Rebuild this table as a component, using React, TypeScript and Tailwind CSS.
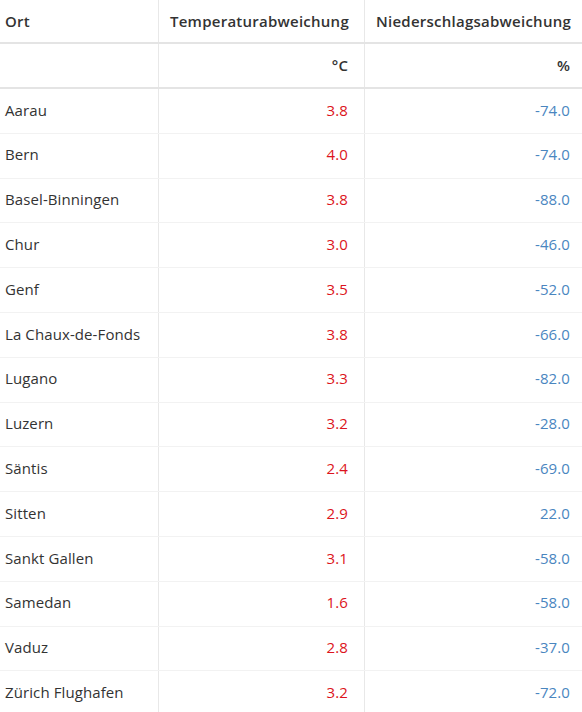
const ROWS = [
  { ort: 'Aarau', t: '3.8', n: '-74.0' },
  { ort: 'Bern', t: '4.0', n: '-74.0' },
  { ort: 'Basel-Binningen', t: '3.8', n: '-88.0' },
  { ort: 'Chur', t: '3.0', n: '-46.0' },
  { ort: 'Genf', t: '3.5', n: '-52.0' },
  { ort: 'La Chaux-de-Fonds', t: '3.8', n: '-66.0' },
  { ort: 'Lugano', t: '3.3', n: '-82.0' },
  { ort: 'Luzern', t: '3.2', n: '-28.0' },
  { ort: 'Säntis', t: '2.4', n: '-69.0' },
  { ort: 'Sitten', t: '2.9', n: '22.0' },
  { ort: 'Sankt Gallen', t: '3.1', n: '-58.0' },
  { ort: 'Samedan', t: '1.6', n: '-58.0' },
  { ort: 'Vaduz', t: '2.8', n: '-37.0' },
  { ort: 'Zürich Flughafen', t: '3.2', n: '-72.0' },
]

export default function App() {
  return (
    <div className="w-[582px] bg-white text-[15px] tracking-[0.1px] text-[#333] font-['Open_Sans',sans-serif]">
      {/* Kopfzeile */}
      <div className="grid grid-cols-[159px_206px_1fr] h-[44px] border-b-2 border-[#e4e4e4] font-semibold tracking-[0.25px]">
        <div className="flex items-center pl-[5px] border-r border-[#e8e8e8]">Ort</div>
        <div className="flex items-center pl-[11px] border-r border-[#e8e8e8]">Temperaturabweichung</div>
        <div className="flex items-center pl-[11px] whitespace-nowrap">Niederschlagsabweichung</div>
      </div>

      {/* Einheiten */}
      <div className="grid grid-cols-[159px_206px_1fr] h-[45px] border-b-2 border-[#e4e4e4] font-semibold">
        <div className="border-r border-[#e8e8e8]" />
        <div className="flex items-center justify-end pr-[16px] border-r border-[#e8e8e8]">°C</div>
        <div className="flex items-center justify-end pr-[12px]">%</div>
      </div>

      {ROWS.map(r => (
        <div key={r.ort} className="grid grid-cols-[159px_206px_1fr] h-[44.8px] border-b border-[#f2f2f2]">
          <div className="flex items-center pl-[5px] pb-[2px] border-r border-[#e8e8e8]">{r.ort}</div>
          <div className="flex items-center justify-end pr-[16px] pb-[2px] border-r border-[#e8e8e8] text-[#dc1420]">{r.t}</div>
          <div className="flex items-center justify-end pr-[12px] pb-[2px] text-[#4a86bf]">{r.n}</div>
        </div>
      ))}
    </div>
  )
}
